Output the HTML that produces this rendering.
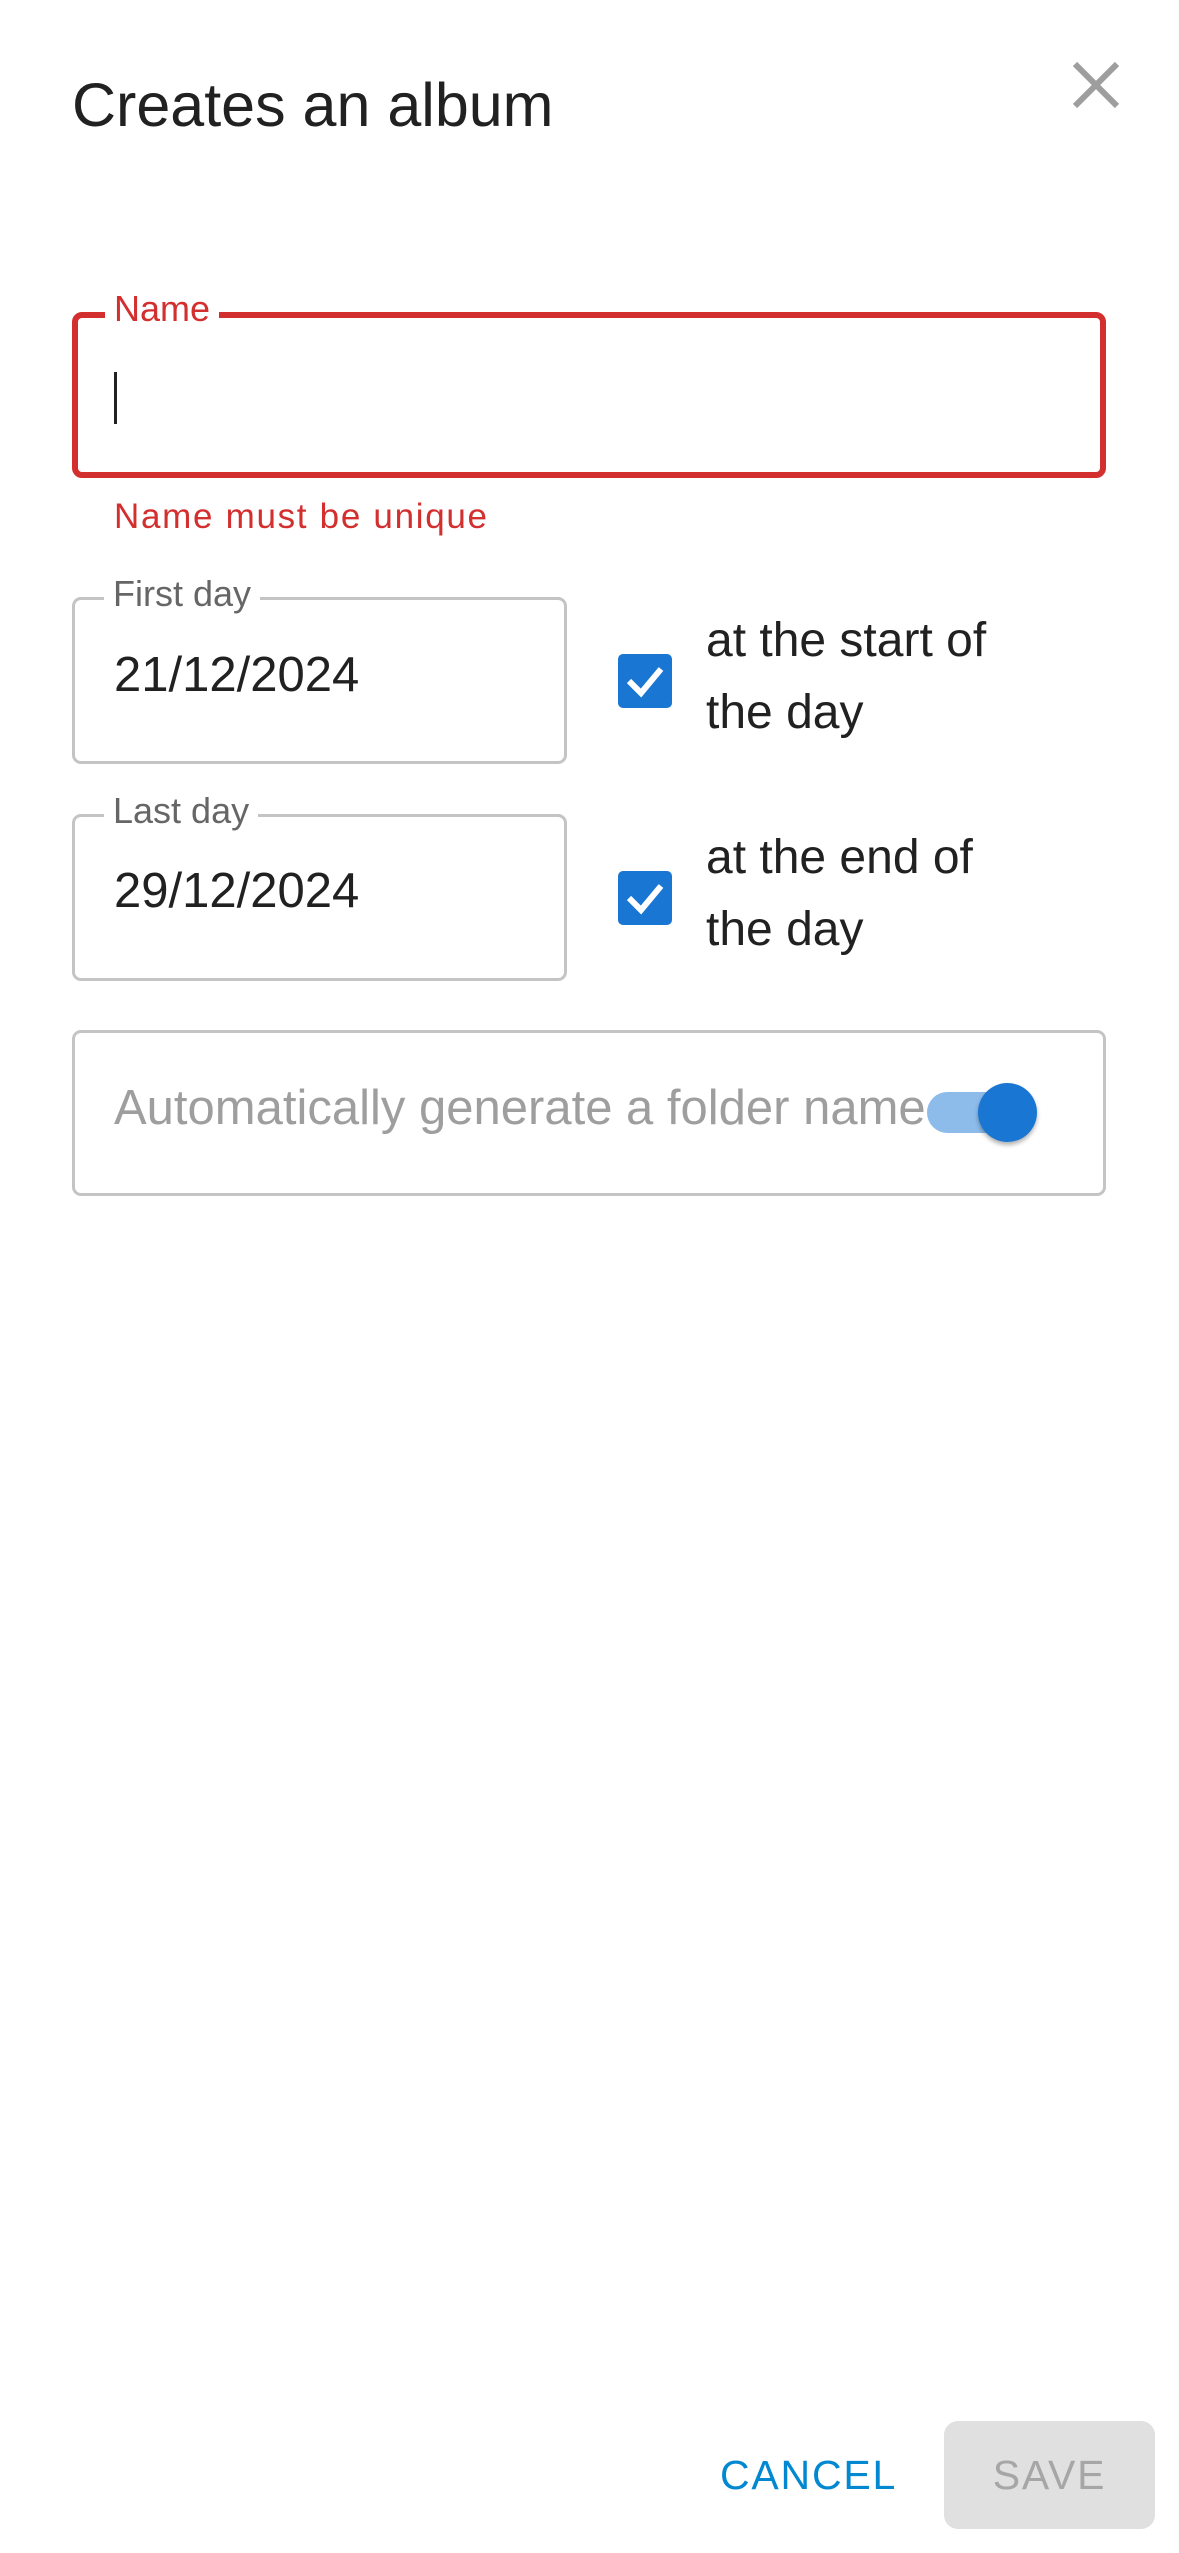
<!DOCTYPE html>
<html><head><meta charset="utf-8"><style>
html,body{margin:0;padding:0;background:#fff;width:1179px;height:2553px;overflow:hidden;font-family:"Liberation Sans",sans-serif;}
.a{position:absolute;white-space:nowrap;}
.box{position:absolute;box-sizing:border-box;border:3px solid #c4c4c4;border-radius:9px;}
.lbl{position:absolute;background:#fff;padding:0 9px;font-size:36px;color:#666;line-height:40px;}
.cb{position:absolute;width:54px;height:54px;background:#1976d2;border-radius:5px;}
</style></head><body>
<div class="a" style="left:72px;top:65px;font-size:61px;line-height:80px;color:#212121;">Creates an album</div>
<svg class="a" style="left:1068px;top:58px" width="56" height="54" viewBox="0 0 56 54"><path d="M7 6 L49 48 M49 6 L7 48" stroke="#9e9e9e" stroke-width="6" fill="none"/></svg>

<div class="box" style="left:72px;top:312px;width:1034px;height:166px;border:6px solid #d32f2f;border-radius:10px;"></div>
<div class="lbl" style="left:105px;top:289px;color:#d32f2f;">Name</div>
<div class="a" style="left:114px;top:372px;width:3px;height:52px;background:#212121;"></div>
<div class="a" style="left:114px;top:497px;font-size:35px;line-height:40px;color:#d32f2f;letter-spacing:1.7px;">Name must be unique</div>

<div class="box" style="left:72px;top:597px;width:495px;height:167px;"></div>
<div class="lbl" style="left:104px;top:574px;">First day</div>
<div class="a" style="left:114px;top:647px;font-size:49px;line-height:56px;color:#212121;">21/12/2024</div>
<div class="cb" style="left:618px;top:654px;"></div>
<svg class="a" style="left:618px;top:654px" width="54" height="54"><path d="M11 27 L23 39 L43 15" stroke="#fff" stroke-width="6" fill="none"/></svg>
<div class="a" style="left:706px;top:605px;font-size:48px;line-height:72px;color:#212121;">at the start of<br>the day</div>

<div class="box" style="left:72px;top:814px;width:495px;height:167px;"></div>
<div class="lbl" style="left:104px;top:791px;">Last day</div>
<div class="a" style="left:114px;top:863px;font-size:49px;line-height:56px;color:#212121;">29/12/2024</div>
<div class="cb" style="left:618px;top:871px;"></div>
<svg class="a" style="left:618px;top:871px" width="54" height="54"><path d="M11 27 L23 39 L43 15" stroke="#fff" stroke-width="6" fill="none"/></svg>
<div class="a" style="left:706px;top:822px;font-size:48px;line-height:72px;color:#212121;">at the end of<br>the day</div>

<div class="box" style="left:72px;top:1030px;width:1034px;height:166px;"></div>
<div class="a" style="left:114px;top:1080px;font-size:49px;line-height:56px;color:#9e9e9e;">Automatically generate a folder name</div>
<div class="a" style="left:927px;top:1092px;width:100px;height:41px;border-radius:21px;background:#8dbbea;"></div>
<div class="a" style="left:978px;top:1083px;width:59px;height:59px;border-radius:50%;background:#1976d2;box-shadow:0 3px 4px rgba(0,0,0,0.3);"></div>

<div class="a" style="left:720px;top:2450px;font-size:41px;line-height:50px;color:#0288d1;letter-spacing:1.8px;">CANCEL</div>
<div class="a" style="left:944px;top:2421px;width:211px;height:108px;border-radius:14px;background:#e0e0e0;"></div>
<div class="a" style="left:944px;top:2450px;width:211px;text-align:center;font-size:41px;line-height:50px;color:#a6a6a6;letter-spacing:1.8px;">SAVE</div>
</body></html>
